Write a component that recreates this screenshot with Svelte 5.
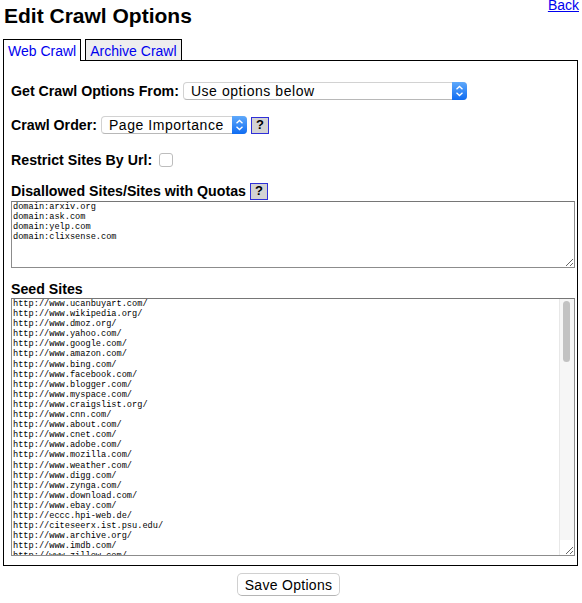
<script>
	const disallowed = ['arxiv.org', 'ask.com', 'yelp.com', 'clixsense.com']
		.map((d) => 'domain:' + d)
		.join('\n');

	const seeds = [
		'www.ucanbuyart.com', 'www.wikipedia.org', 'www.dmoz.org', 'www.yahoo.com', 'www.google.com',
		'www.amazon.com', 'www.bing.com', 'www.facebook.com', 'www.blogger.com', 'www.myspace.com',
		'www.craigslist.org', 'www.cnn.com', 'www.about.com', 'www.cnet.com', 'www.adobe.com',
		'www.mozilla.com', 'www.weather.com', 'www.digg.com', 'www.zynga.com', 'www.download.com',
		'www.ebay.com', 'eccc.hpi-web.de', 'citeseerx.ist.psu.edu', 'www.archive.org', 'www.imdb.com',
		'www.zillow.com', 'www.ask.com', 'www.reddit.com', 'www.paypal.com', 'www.apple.com'
	]
		.map((s) => 'http://' + s + '/')
		.join('\n');
</script>

<div class="page">
	<a class="back" href="#back">Back</a>
	<h1>Edit Crawl Options</h1>

	<ul class="tabs">
		<li class="active"><a href="#web">Web Crawl</a></li>
		<li><a href="#archive">Archive Crawl</a></li>
	</ul>

	<form class="panel">
		<div class="row first">
			<label for="source">Get Crawl Options From:</label>
			<span class="select wide">
				<select id="source">
					<option>Use options below</option>
				</select>
				<svg viewBox="0 0 15 18" aria-hidden="true">
					<path d="M4.5 7.2 7.5 4.4l3 2.8M4.5 10.8l3 2.8 3-2.8" />
				</svg>
			</span>
		</div>

		<div class="row order">
			<label for="order">Crawl Order:</label>
			<span class="select">
				<select id="order">
					<option>Page Importance</option>
				</select>
				<svg viewBox="0 0 15 18" aria-hidden="true">
					<path d="M4.5 7.2 7.5 4.4l3 2.8M4.5 10.8l3 2.8 3-2.8" />
				</svg>
			</span>
			<button type="button" class="help">?</button>
		</div>

		<div class="row restrict">
			<label for="restrict">Restrict Sites By Url:</label>
			<input id="restrict" type="checkbox" />
		</div>

		<div class="row heading">
			<label for="disallowed">Disallowed Sites/Sites with Quotas</label>
			<button type="button" class="help">?</button>
		</div>
		<textarea id="disallowed" class="small" readonly value={disallowed}></textarea>

		<label class="seed-label" for="seeds">Seed Sites</label>
		<div class="seed-box">
			<textarea id="seeds" class="big" readonly value={seeds}></textarea>
			<!-- headless chromium hides real scrollbars, so this one is drawn -->
			<div class="scrollbar"><div class="thumb"></div></div>
			<div class="corner"></div>
		</div>
	</form>

	<div class="actions">
		<button type="button" class="save">Save Options</button>
	</div>
</div>

<style>
	:global(body) {
		background: #fff;
		color: #000;
		font-family: 'Liberation Sans', Arial, sans-serif;
	}

	.page {
		position: relative;
		width: 582px;
		height: 603px;
		overflow: hidden;
		box-sizing: border-box;
		padding: 0 4px 0 3px;
	}

	a {
		color: #0000ee;
	}

	.back {
		position: absolute;
		top: 0;
		right: 3px;
		font-size: 14px;
		line-height: 11px;
	}

	h1 {
		margin: 0;
		padding: 4px 0 0 1px;
		font-size: 21px;
		line-height: 24px;
		font-weight: bold;
	}

	.tabs {
		display: flex;
		gap: 4px;
		list-style: none;
		margin: 11px 0 0;
		padding: 0;
		height: 21px;
		position: relative;
		z-index: 1;
	}

	.tabs li {
		box-sizing: border-box;
		height: 21px;
		padding: 3px 4px 0;
		border: 1px solid #000;
		border-bottom: 0;
		background: #eee;
		font-size: 14px;
		line-height: 16px;
	}

	.tabs li.active {
		height: 22px;
		background: #fff;
	}

	.tabs a {
		text-decoration: none;
	}

	.panel {
		box-sizing: border-box;
		height: 506px;
		border: 1px solid #000;
		padding: 21px 3px 0 7px;
		display: flex;
		flex-direction: column;
	}

	.row {
		display: flex;
		align-items: center;
		height: 18px;
	}

	label {
		font-size: 14.2px;
		font-weight: bold;
		line-height: 16px;
	}

	.select {
		position: relative;
		display: block;
		width: 146px;
		height: 18px;
		margin-left: 4px;
		flex: none;
	}

	.select.wide {
		width: 284px;
	}

	select {
		appearance: none;
		box-sizing: border-box;
		display: block;
		width: 100%;
		height: 18px;
		margin: 0;
		padding: 0 20px 0 7px;
		border: 1px solid #d2d2d2;
		border-bottom-color: #b8b8b8;
		border-radius: 4px;
		background: #fff;
		color: #000;
		font-family: 'Liberation Sans', Arial, sans-serif;
		font-size: 14px;
		line-height: 16px;
		letter-spacing: 0.55px;
	}

	.select svg {
		position: absolute;
		top: 0;
		right: 0;
		width: 15px;
		height: 18px;
		border-radius: 0 4px 4px 0;
		background: linear-gradient(#5fa9fb, #0f6cf2);
	}

	.select path {
		fill: none;
		stroke: #fff;
		stroke-width: 1.3;
	}

	.help {
		box-sizing: border-box;
		width: 18px;
		height: 17px;
		margin: 0 0 0 4px;
		padding: 0;
		border: 1px solid #3030d8;
		background: #d3d3d3;
		color: #000;
		font-family: 'Liberation Sans', Arial, sans-serif;
		font-size: 13px;
		font-weight: bold;
		line-height: 14px;
	}

	.order {
		margin-top: 16px;
	}

	.restrict {
		margin-top: 17px;
	}

	input[type='checkbox'] {
		appearance: none;
		box-sizing: border-box;
		width: 14px;
		height: 14px;
		margin: 0 0 0 7px;
		border: 1px solid #bdbdbd;
		border-radius: 3px;
		background: #fff;
	}

	.heading {
		margin-top: 13px;
	}

	textarea {
		box-sizing: border-box;
		display: block;
		width: 564px;
		margin: 0;
		padding: 0 1px;
		border: 1px solid #8c8c8c;
		border-top-color: #767676;
		border-radius: 0;
		outline: none;
		background: #fff;
		color: #000;
		font-family: 'Liberation Mono', 'Courier New', monospace;
		font-size: 8.65px;
		line-height: 10.1px;
		white-space: pre;
	}

	.small {
		height: 67px;
		margin-top: 1px;
		overflow: hidden;
	}

	.seed-box {
		position: relative;
		width: 564px;
	}

	.big {
		height: 258px;
		overflow: hidden;
	}

	.scrollbar {
		position: absolute;
		top: 1px;
		right: 1px;
		width: 15px;
		height: 241px;
		box-sizing: border-box;
		padding: 2px 4px 0 3px;
		background: #f6f6f6;
		border-left: 1px solid #e8e8e8;
	}

	.thumb {
		height: 61px;
		border-radius: 4px;
		background: #c2c2c2;
	}

	.corner {
		position: absolute;
		right: 1px;
		bottom: 1px;
		width: 15px;
		height: 15px;
		box-sizing: border-box;
		border-left: 1px solid #e8e8e8;
		pointer-events: none;
	}

	.seed-label {
		display: block;
		margin-top: 13px;
		height: 17px;
	}

	.actions {
		display: flex;
		justify-content: center;
		padding: 7px 4px 0 0;
	}

	.save {
		box-sizing: border-box;
		width: 103px;
		height: 23px;
		margin: 0;
		padding: 0;
		border: 1px solid #d0d0d0;
		border-bottom-color: #b5b5b5;
		border-radius: 5px;
		background: #fff;
		color: #000;
		font-family: 'Liberation Sans', Arial, sans-serif;
		font-size: 14px;
		letter-spacing: 0.3px;
	}
</style>
